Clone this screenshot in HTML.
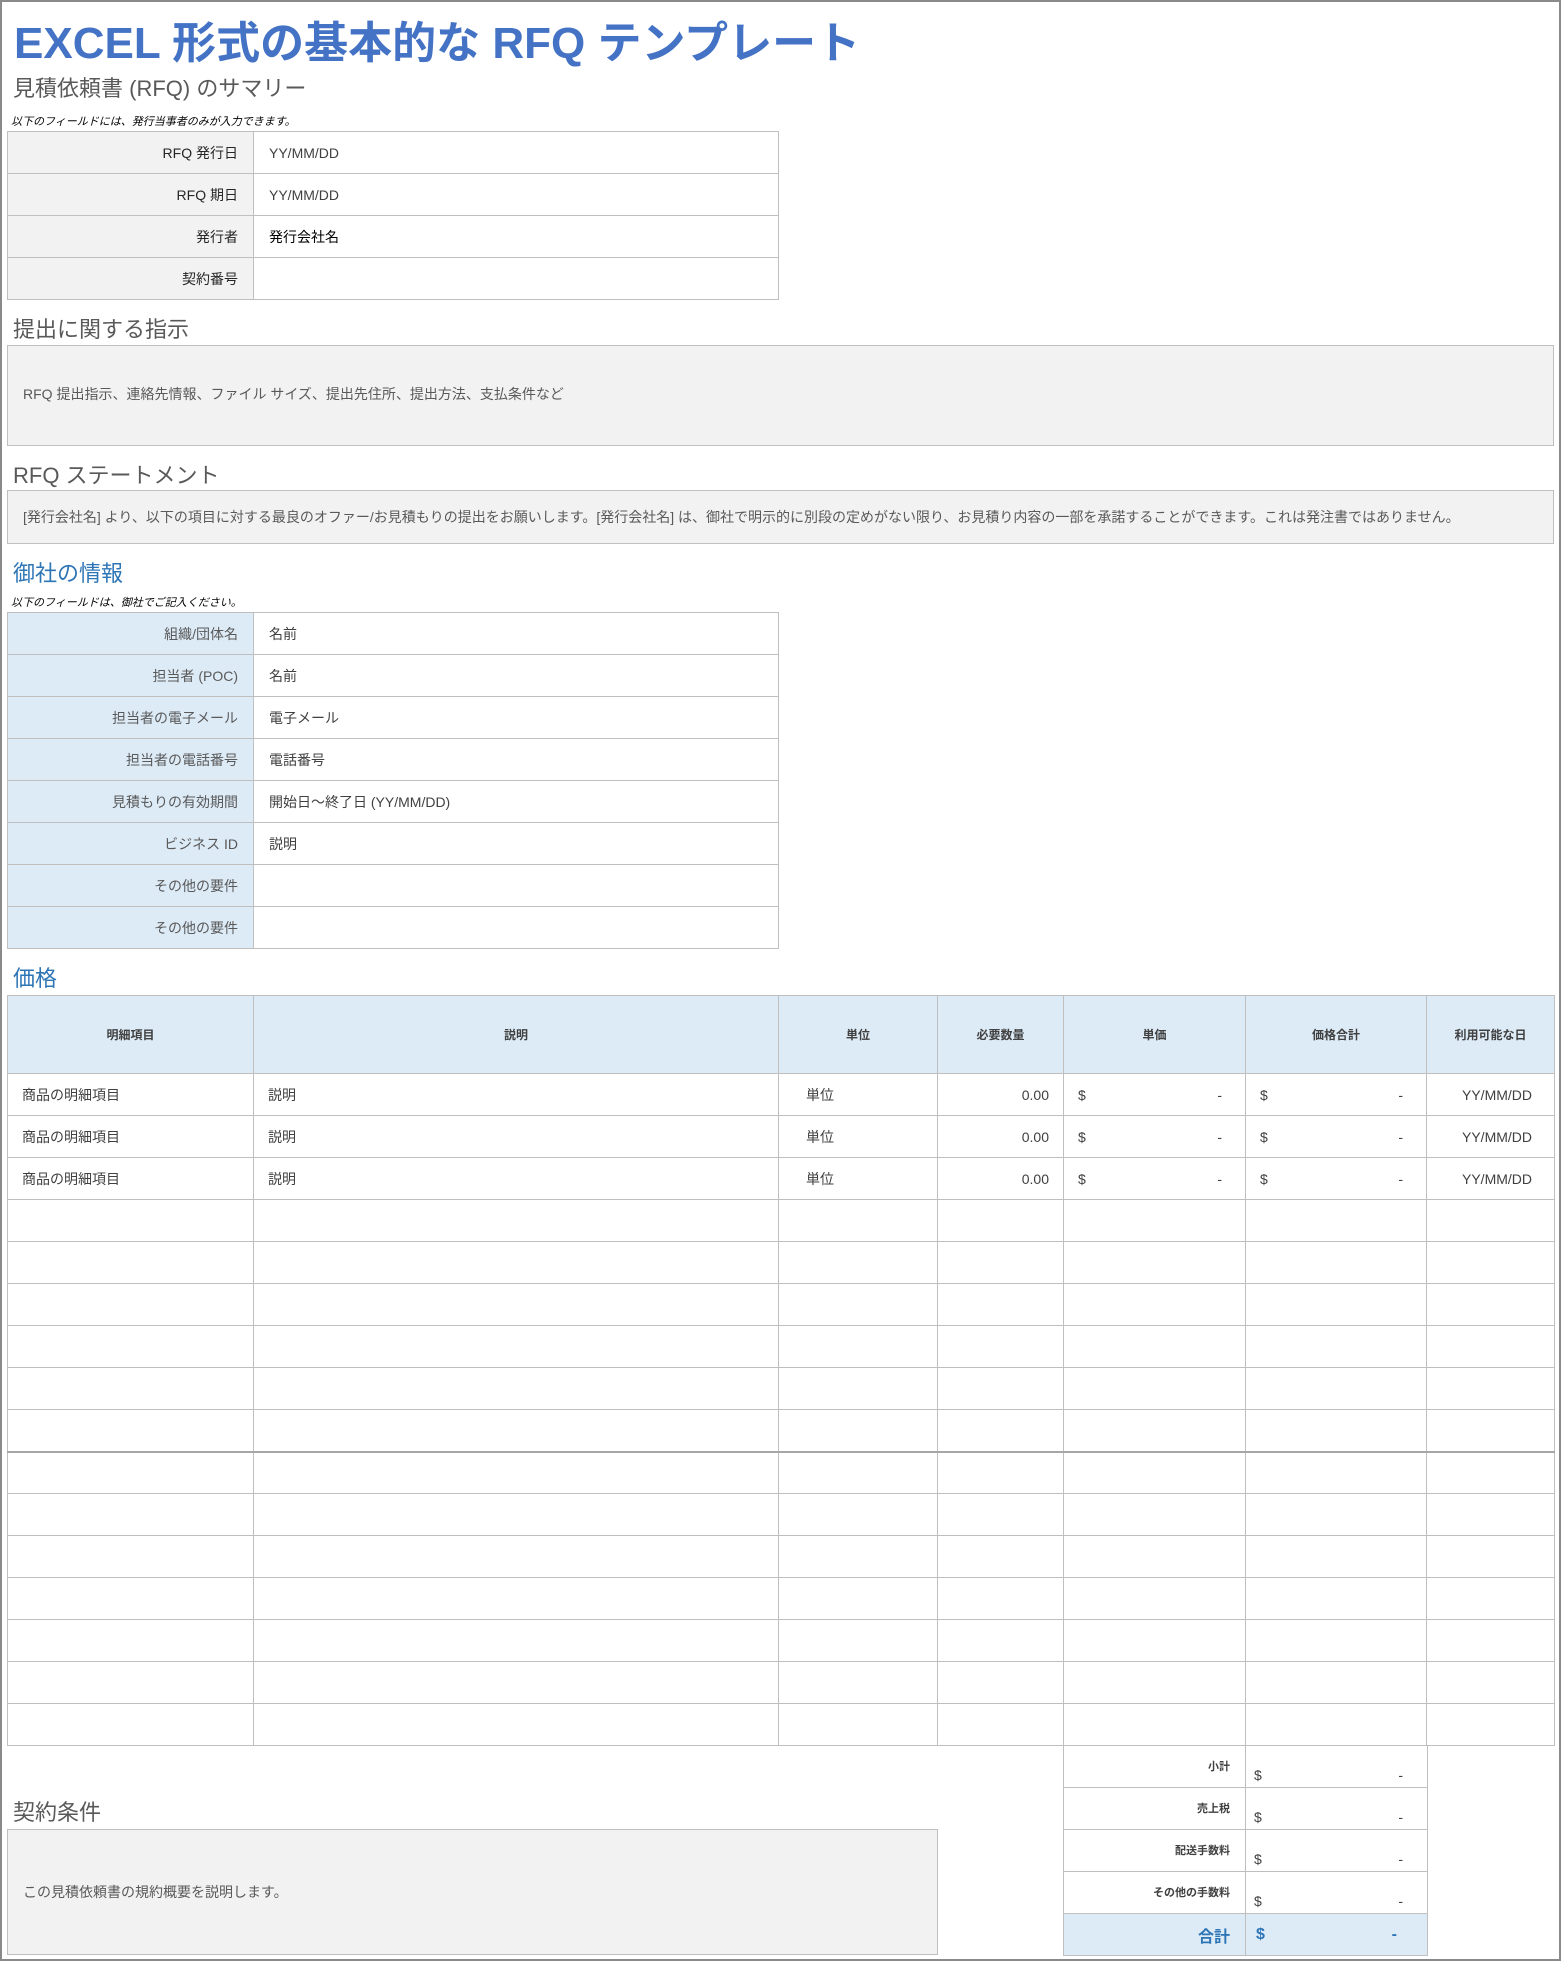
<!DOCTYPE html>
<html><head><meta charset="utf-8">
<style>
*{margin:0;padding:0;box-sizing:border-box}
body{width:1561px;height:1961px;background:#fff;position:relative;overflow:hidden;font-family:"Liberation Sans","Noto Sans CJK JP",sans-serif;color:#404040}
.frame{position:absolute;left:0;top:0;width:1561px;height:1961px;border:2px solid #8a8a8a}
h1{position:absolute;left:14px;top:7px;font-size:44px;font-weight:bold;color:#4472c4;white-space:nowrap}
.h2{position:absolute;left:13px;font-size:22px;color:#595959;white-space:nowrap}
.h2b{position:absolute;left:13px;font-size:22px;color:#2e75b6;white-space:nowrap}
.note{position:absolute;left:11px;font-size:11px;font-style:italic;color:#000;white-space:nowrap}
table{position:absolute;border-collapse:collapse}
td{border:1px solid #bfbfbf;font-size:14px;height:42px;white-space:nowrap;padding:0 15px}
.lab{text-align:right;background:#f2f2f2;color:#262626}
.lab2{text-align:right;background:#ddebf7;color:#595959}
.box{position:absolute;background:#f2f2f2;border:1px solid #bfbfbf;font-size:14px;color:#595959;white-space:nowrap}
.pt td{padding:0 14px;color:#404040}
.pt th{border:1px solid #bfbfbf;background:#ddebf7;font-size:12px;font-weight:bold;color:#404040;height:78px}
.r{text-align:right}
.g{color:#909090}
.u{padding-left:27px !important}
</style></head><body>
<div class="frame"></div>
<h1>EXCEL 形式の基本的な RFQ テンプレート</h1>
<div class="h2" style="top:71px">見積依頼書 (RFQ) のサマリー</div>
<div class="note" style="top:113px">以下のフィールドには、発行当事者のみが入力できます。</div>
<table style="left:7px;top:131px;width:772px">
<tr><td class="lab" style="width:246px">RFQ 発行日</td><td>YY/MM/DD</td></tr>
<tr><td class="lab">RFQ 期日</td><td>YY/MM/DD</td></tr>
<tr><td class="lab">発行者</td><td style="color:#000">発行会社名</td></tr>
<tr><td class="lab">契約番号</td><td></td></tr>
</table>
<div class="h2" style="top:312px">提出に関する指示</div>
<div class="box" style="left:7px;top:345px;width:1547px;height:101px;padding:38px 15px">RFQ 提出指示、連絡先情報、ファイル サイズ、提出先住所、提出方法、支払条件など</div>
<div class="h2" style="top:458px">RFQ ステートメント</div>
<div class="box" style="left:7px;top:490px;width:1547px;height:54px;padding:16px 15px">[発行会社名] より、以下の項目に対する最良のオファー/お見積もりの提出をお願いします。[発行会社名] は、御社で明示的に別段の定めがない限り、お見積り内容の一部を承諾することができます。これは発注書ではありません。</div>
<div class="h2b" style="top:556px">御社の情報</div>
<div class="note" style="top:594px">以下のフィールドは、御社でご記入ください。</div>
<table style="left:7px;top:612px;width:772px">
<tr><td class="lab2" style="width:246px">組織/団体名</td><td>名前</td></tr>
<tr><td class="lab2">担当者 (POC)</td><td>名前</td></tr>
<tr><td class="lab2">担当者の電子メール</td><td>電子メール</td></tr>
<tr><td class="lab2">担当者の電話番号</td><td>電話番号</td></tr>
<tr><td class="lab2">見積もりの有効期間</td><td>開始日～終了日 (YY/MM/DD)</td></tr>
<tr><td class="lab2">ビジネス ID</td><td>説明</td></tr>
<tr><td class="lab2">その他の要件</td><td></td></tr>
<tr><td class="lab2">その他の要件</td><td></td></tr>
</table>
<div class="h2b" style="top:961px">価格</div>
<table class="pt" style="left:7px;top:995px;width:1547px;table-layout:fixed">
<colgroup><col style="width:246px"><col style="width:525px"><col style="width:159px"><col style="width:126px"><col style="width:182px"><col style="width:181px"><col style="width:128px"></colgroup>
<tr><th>明細項目</th><th>説明</th><th>単位</th><th>必要数量</th><th>単価</th><th>価格合計</th><th>利用可能な日</th></tr>
<tr><td>商品の明細項目</td><td>説明</td><td class="u">単位</td><td class="r">0.00</td><td>$<span style="float:right;margin-right:9px">-</span></td><td>$<span style="float:right;margin-right:9px">-</span></td><td class="r g" style="padding-right:22px">YY/MM/DD</td></tr>
<tr><td>商品の明細項目</td><td>説明</td><td class="u">単位</td><td class="r">0.00</td><td>$<span style="float:right;margin-right:9px">-</span></td><td>$<span style="float:right;margin-right:9px">-</span></td><td class="r g" style="padding-right:22px">YY/MM/DD</td></tr>
<tr><td>商品の明細項目</td><td>説明</td><td class="u">単位</td><td class="r">0.00</td><td>$<span style="float:right;margin-right:9px">-</span></td><td>$<span style="float:right;margin-right:9px">-</span></td><td class="r g" style="padding-right:22px">YY/MM/DD</td></tr>
<tr><td></td><td></td><td></td><td></td><td></td><td></td><td></td></tr>
<tr><td></td><td></td><td></td><td></td><td></td><td></td><td></td></tr>
<tr><td></td><td></td><td></td><td></td><td></td><td></td><td></td></tr>
<tr><td></td><td></td><td></td><td></td><td></td><td></td><td></td></tr>
<tr><td></td><td></td><td></td><td></td><td></td><td></td><td></td></tr>
<tr><td></td><td></td><td></td><td></td><td></td><td></td><td></td></tr>
<tr style="border-top:2px solid #a6a6a6"><td></td><td></td><td></td><td></td><td></td><td></td><td></td></tr>
<tr><td></td><td></td><td></td><td></td><td></td><td></td><td></td></tr>
<tr><td></td><td></td><td></td><td></td><td></td><td></td><td></td></tr>
<tr><td></td><td></td><td></td><td></td><td></td><td></td><td></td></tr>
<tr><td></td><td></td><td></td><td></td><td></td><td></td><td></td></tr>
<tr><td></td><td></td><td></td><td></td><td></td><td></td><td></td></tr>
<tr><td></td><td></td><td></td><td></td><td></td><td></td><td></td></tr>
</table>
<table style="left:1063px;top:1745px;width:364px;table-layout:fixed">
<colgroup><col style="width:182px"><col style="width:182px"></colgroup>
<tr><td class="r" style="font-size:11px;font-weight:bold;vertical-align:top;padding-top:12px">小計</td><td style="vertical-align:bottom;padding:0 8px 4px">$<span style="float:right;margin-right:16px">-</span></td></tr>
<tr><td class="r" style="font-size:11px;font-weight:bold;vertical-align:top;padding-top:12px">売上税</td><td style="vertical-align:bottom;padding:0 8px 4px">$<span style="float:right;margin-right:16px">-</span></td></tr>
<tr><td class="r" style="font-size:11px;font-weight:bold;vertical-align:top;padding-top:12px">配送手数料</td><td style="vertical-align:bottom;padding:0 8px 4px">$<span style="float:right;margin-right:16px">-</span></td></tr>
<tr><td class="r" style="font-size:11px;font-weight:bold;vertical-align:top;padding-top:12px">その他の手数料</td><td style="vertical-align:bottom;padding:0 8px 4px">$<span style="float:right;margin-right:16px">-</span></td></tr>
<tr><td class="r" style="background:#ddebf7;color:#2e75b6;font-size:16px;font-weight:bold">合計</td><td style="background:#ddebf7;color:#2e75b6;font-size:16px;font-weight:bold;padding:0 10px">$<span style="float:right;margin-right:20px">-</span></td></tr>
</table>
<div class="h2" style="top:1795px">契約条件</div>
<div class="box" style="left:7px;top:1829px;width:931px;height:126px;padding:52px 15px">この見積依頼書の規約概要を説明します。</div>
</body></html>
